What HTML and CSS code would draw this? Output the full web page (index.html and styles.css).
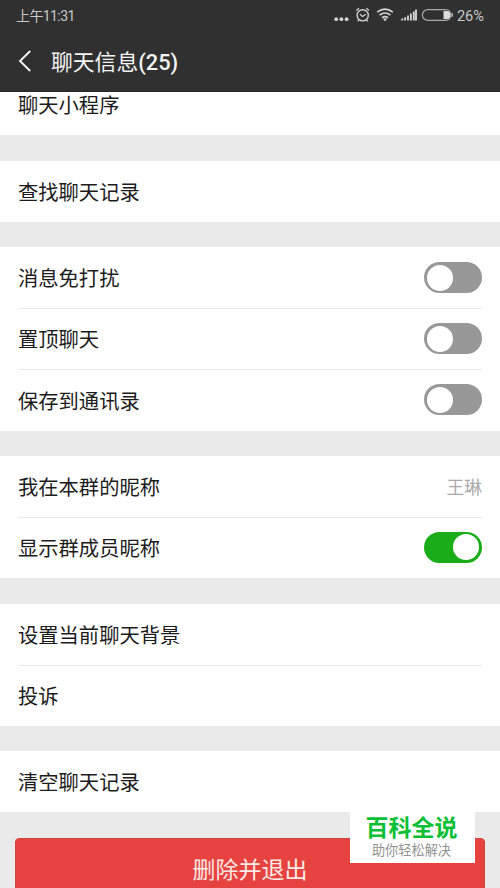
FILE: index.html
```html
<!DOCTYPE html>
<html lang="zh-CN">
<head>
<meta charset="utf-8">
<title>聊天信息</title>
<link rel="stylesheet" href="styles.css">
</head>
<body>
<div class="screen">
  <header class="header">
    <div class="status">
      <span class="time">上午11:31</span>
      <svg class="status-icons" width="133" height="24" viewBox="0 0 133 24" fill="none" stroke="#d2d2d2">
        <g fill="#d2d2d2" stroke="none">
          <circle cx="15.2" cy="15.2" r="1.9"/><circle cx="20.4" cy="15.2" r="1.9"/><circle cx="25.6" cy="15.2" r="1.9"/>
        </g>
        <circle cx="41.7" cy="11.3" r="5.6" stroke-width="1.4"/>
        <path d="M38.9 10.2l2.8 2.2 3-2.2M35.4 6.5l2.6-2.3M48 6.5l-2.6-2.3M37.8 15.8l-1.2 1.5M45.6 15.8l1.2 1.5" stroke-width="1.3"/>
        <path d="M56.2 8.2q7.8-6 15.6 0M58.6 11.1q5.4-4.2 10.8 0M61 13.8q3-2.4 6 0" stroke-width="1.7"/>
        <path d="M62 15l2 2.2 2-2.2q-2-1.4-4 0z" fill="#d2d2d2" stroke="none"/>
        <path d="M81.2 16.5v-2M84.1 16.5v-3.2M87 16.5v-5M89.9 16.5v-7M92.8 16.5v-9M95 16.5v-11" stroke-width="1.9"/>
        <rect x="101.4" y="5.7" width="28.6" height="10.6" rx="5.3" stroke="#aaa" stroke-width="1.2"/>
        <path d="M122.5 7.1h3a3.9 3.9 0 0 1 0 7.8h-3z" fill="#ddd" stroke="none"/>
        <path d="M131.2 9.2v3.6" stroke-width="1.2"/>
      </svg>
      <span class="percent">26%</span>
    </div>
    <div class="titlebar">
      <svg class="back" width="14" height="24" viewBox="0 0 14 24" fill="none" stroke="#f4f4f4" stroke-width="1.9"><path d="M12.2 2L2 12l10.2 10"/></svg>
      <h1 class="title">聊天信息<span class="count">(25)</span></h1>
    </div>
  </header>
  <main class="list">
    <section class="group first"><div class="row">聊天小程序</div></section>
    <section class="group"><div class="row">查找聊天记录</div></section>
    <section class="group">
      <div class="row">消息免打扰<span class="switch"></span></div>
      <div class="row">置顶聊天<span class="switch"></span></div>
      <div class="row">保存到通讯录<span class="switch"></span></div>
    </section>
    <section class="group">
      <div class="row">我在本群的昵称<span class="value">王琳</span></div>
      <div class="row">显示群成员昵称<span class="switch on"></span></div>
    </section>
    <section class="group">
      <div class="row">设置当前聊天背景</div>
      <div class="row">投诉</div>
    </section>
    <section class="group"><div class="row">清空聊天记录</div></section>
    <div class="delete">删除并退出</div>
  </main>
  <aside class="watermark">
    <strong class="brand">百科全说</strong>
    <span class="slogan">助你轻松解决</span>
  </aside>
</div>
</body>
</html>
```
FILE: styles.css
```css
* { box-sizing: border-box; }
body {
  margin: 0;
  font-family: Roboto, "Noto Sans CJK SC", sans-serif;
}
.screen {
  position: relative;
  display: flex;
  flex-direction: column;
  width: 500px;
  height: 888px;
  overflow: hidden;
  background: #eaeaea;
}
.header {
  flex: none;
  height: 92px;
  background: #303030;
  border-bottom: 1px solid #262626;
}
.status {
  display: flex;
  align-items: center;
  height: 31px;
  padding: 0 16px 0 16px;
  color: #c8c8c8;
  font-size: 14.6px;
  line-height: 20px;
}
.time { font-size: 14px; letter-spacing: -0.6px; }
.status-icons { margin: 1px 3.3px 0 auto; }
.titlebar {
  display: flex;
  align-items: center;
  height: 60px;
  padding-left: 18px;
}
.title {
  margin: 0 0 0 19px;
  padding-top: 3px;
  color: #f4f4f4;
  font-size: 21.8px;
  font-weight: 400;
  line-height: 30px;
}
.count { font-weight: 500; }
.list {
  flex: 1;
  display: flex;
  flex-direction: column;
  gap: 25.4px;
  overflow: hidden;
}
.group {
  flex: none;
  padding: 0 18px;
  background: #fff;
}
.first { margin-top: -17.7px; }
.row {
  display: flex;
  align-items: center;
  justify-content: space-between;
  height: 61.1px;
  padding-top: 3px;
  color: #1c1c1c;
  font-size: 20.3px;
  line-height: 30px;
}
.row + .row { padding-top: 2px; border-top: 1px solid #e9e9e9; }
.value { color: #aaa; font-size: 17.7px; }
.switch {
  display: flex;
  width: 58px;
  height: 31px;
  margin-top: -3.5px;
  padding: 2.5px 3px;
  border-radius: 16px;
  background: #989898;
}
.switch::before {
  content: "";
  width: 26px;
  height: 26px;
  border-radius: 50%;
  background: #fff;
}
.on { justify-content: flex-end; background: #1aad19; }
.delete {
  flex: none;
  height: 63px;
  margin: 0 15px;
  border: 1px solid #cf4440;
  border-radius: 4px;
  background: #e64340;
  color: #fbe9e4;
  font-size: 23px;
  line-height: 64px;
  text-align: center;
}
.watermark {
  position: absolute;
  left: 350px;
  top: 812px;
  display: flex;
  flex-direction: column;
  align-items: center;
  width: 125px;
  height: 51px;
  padding-right: 2px;
  background: #fff;
}
.brand {
  padding-top: 1px;
  color: #0abf35;
  font-size: 23px;
  font-weight: 700;
  line-height: 31px;
}
.slogan {
  color: #929292;
  font-size: 13.2px;
  line-height: 13px;
}
```
